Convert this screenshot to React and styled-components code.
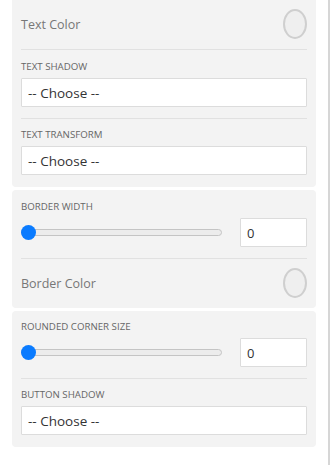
import React from 'react';
import styled, { createGlobalStyle } from 'styled-components';

const GlobalStyle = createGlobalStyle`
	html, body {
		margin: 0;
		padding: 0;
		background: #ffffff;
		font-family: "Open Sans", "Liberation Sans", sans-serif;
	}
	* {
		box-sizing: border-box;
	}
`;

const Page = styled.div`
	display: flex;
	flex-direction: row;
	width: 331px;
	height: 475px;
	overflow: hidden;
`;

const Column = styled.div`
	display: flex;
	flex-direction: column;
	gap: 3px;
	width: 304px;
	margin-left: 12px;
`;

const ScrollRail = styled.div`
	width: 2px;
	height: 465px;
	margin-left: auto;
	margin-right: 1px;
	background: #d6d6d6;
`;

const Panel = styled.div`
	display: flex;
	flex-direction: column;
	background: #f3f3f3;
	border-radius: ${(p) => (p.$first ? '0 0 4px 4px' : '4px')};
	padding: 0 9px;
`;

const Field = styled.div`
	display: flex;
	flex-direction: column;
	padding: ${(p) => (p.$tight ? '10px' : '11px')} 0 ${(p) => (p.$last ? '12px' : '11px')};
	border-bottom: ${(p) => (p.$last ? 'none' : '1px solid #e1e1e1')};
`;

const Label = styled.span`
	font-size: 9.7px;
	line-height: 12px;
	text-transform: uppercase;
	color: #666;
	margin-bottom: 5px;
`;

const ColorRow = styled.div`
	display: flex;
	flex-direction: row;
	align-items: center;
	justify-content: space-between;
	padding: 9px 0 10px;
	border-bottom: ${(p) => (p.$last ? 'none' : '1px solid #e1e1e1')};
`;

const ColorName = styled.span`
	font-size: 12.5px;
	color: #777;
`;

const Swatch = styled.div`
	flex: 0 0 24px;
	width: 24px;
	height: 30px;
	border-radius: 50%;
	border: 2px solid #cfcfcf;
	background: #efefef;
`;

const Select = styled.select`
	appearance: none;
	-webkit-appearance: none;
	width: 100%;
	height: 29px;
	border: 1px solid #dcdcdc;
	background: #ffffff;
	border-radius: 1px;
	padding: 0 6px;
	font-family: "Open Sans", "Liberation Sans", sans-serif;
	font-size: 13.5px;
	color: #333;
	outline: none;
`;

const SliderRow = styled.div`
	display: flex;
	flex-direction: row;
	align-items: center;
	gap: 18px;
`;

const Range = styled.input`
	appearance: none;
	-webkit-appearance: none;
	width: 201px;
	height: 7px;
	margin: 0;
	border: 1px solid #c4c4c4;
	border-radius: 4px;
	background: #ececec;
	outline: none;

	&::-webkit-slider-thumb {
		-webkit-appearance: none;
		width: 15px;
		height: 15px;
		border-radius: 50%;
		background: #0a7bff;
		border: none;
		margin-left: -1px;
	}
`;

const NumberBox = styled.input`
	width: 67px;
	height: 29px;
	border: 1px solid #dcdcdc;
	background: #ffffff;
	border-radius: 1px;
	padding: 0 6px;
	font-family: "Open Sans", "Liberation Sans", sans-serif;
	font-size: 13px;
	color: #333;
	outline: none;
`;

const ChooseField = ({ label, last, tight }) => (
	<Field $last={last} $tight={tight}>
		<Label>{label}</Label>
		<Select defaultValue="">
			<option value="">-- Choose --</option>
		</Select>
	</Field>
);

const SliderField = ({ label, tight }) => (
	<Field $tight={tight}>
		<Label>{label}</Label>
		<SliderRow>
			<Range type="range" min="0" max="20" defaultValue="0" />
			<NumberBox type="text" defaultValue="0" />
		</SliderRow>
	</Field>
);

const App = () => {
	return (
		<Page>
			<GlobalStyle />
			<Column>
				<Panel $first>
					<ColorRow>
						<ColorName>Text Color</ColorName>
						<Swatch />
					</ColorRow>
					<ChooseField label="Text Shadow" />
					<ChooseField label="Text Transform" last tight />
				</Panel>
				<Panel>
					<SliderField label="Border Width" />
					<ColorRow $last>
						<ColorName>Border Color</ColorName>
						<Swatch />
					</ColorRow>
				</Panel>
				<Panel>
					<SliderField label="Rounded Corner Size" tight />
					<ChooseField label="Button Shadow" last tight />
				</Panel>
			</Column>
			<ScrollRail />
		</Page>
	);
};

export default App;
